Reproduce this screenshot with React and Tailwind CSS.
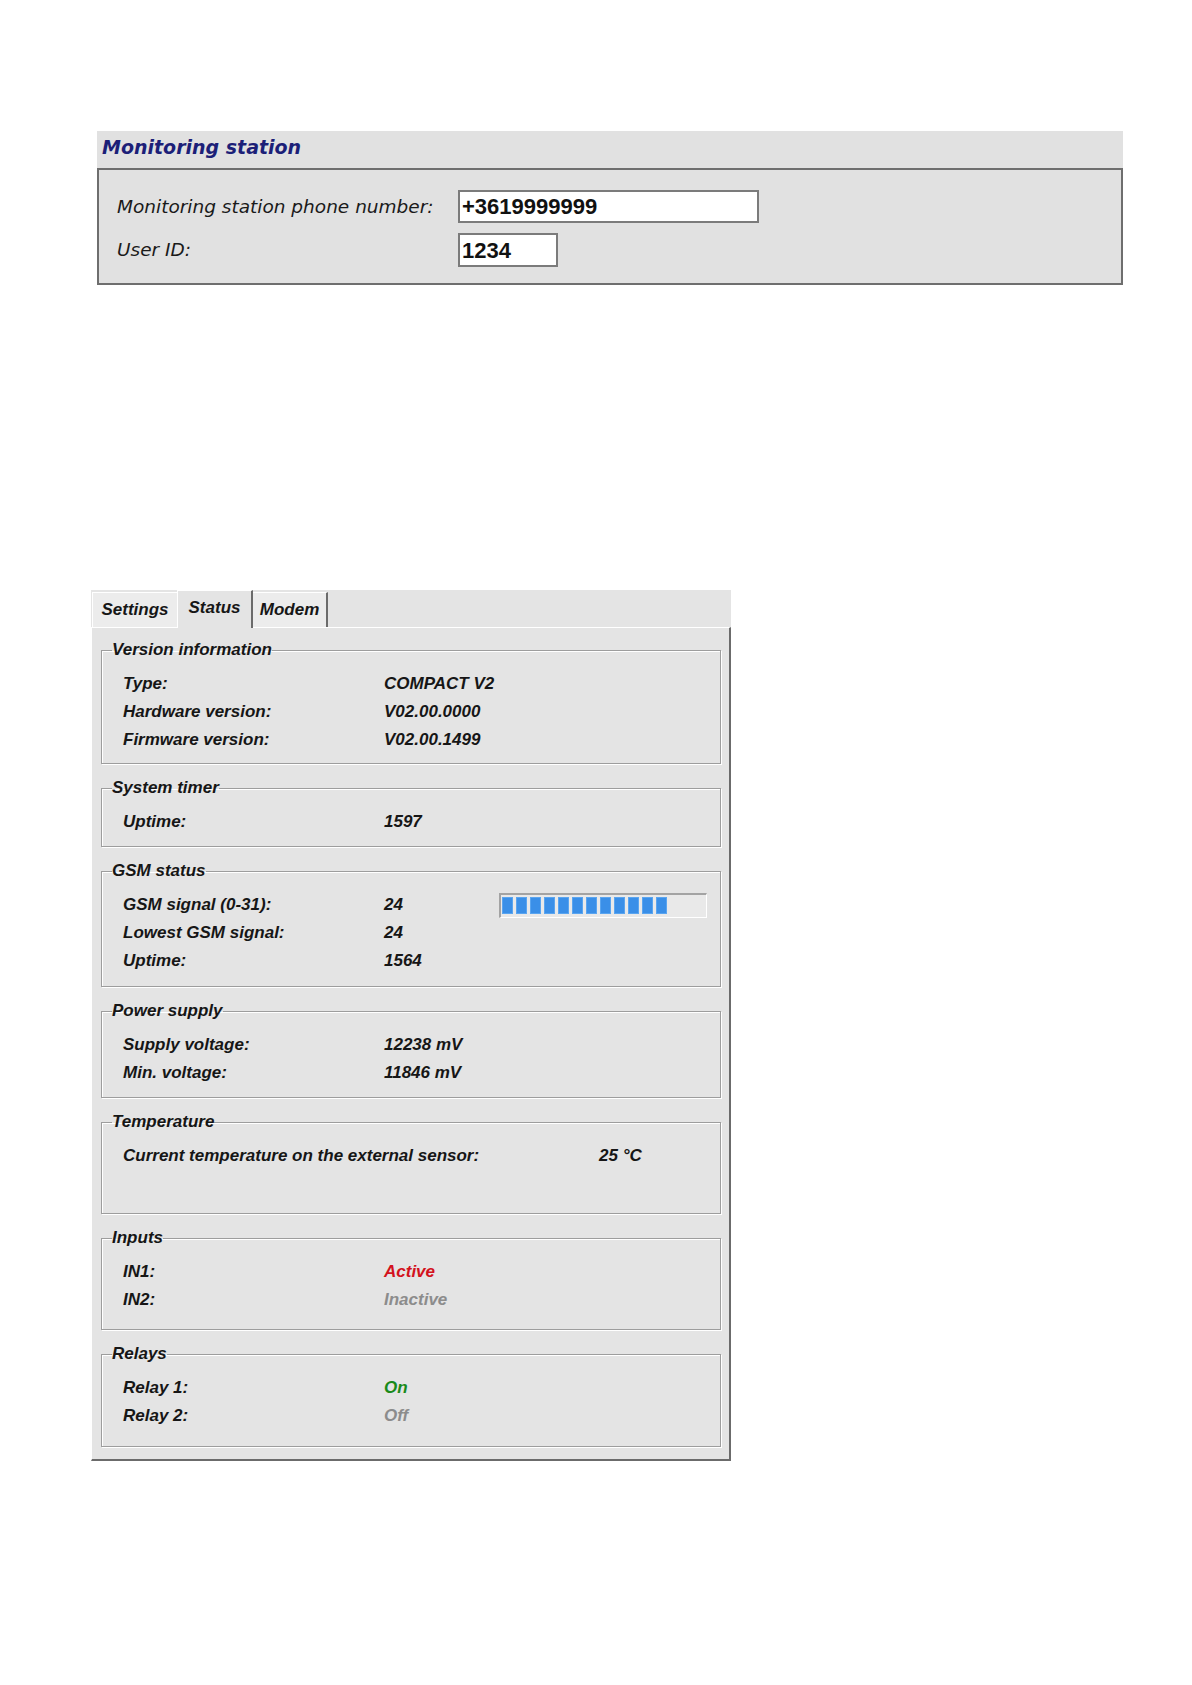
const rowLabel = "text-[17px] leading-[28px] font-bold italic text-[#161616]";

const GroupBox = ({ title, className = "", children }) => (
  <fieldset
    className={`border border-[#9d9d9d] shadow-[1px_1px_0_#ffffff,inset_1px_1px_0_#ffffff] pt-[10px] ${className}`}
  >
    <legend className="ml-[10px] px-0 text-[17px] leading-[20px] font-bold italic text-[#161616]">
      {title}
    </legend>
    <div className="pl-[21px]">{children}</div>
  </fieldset>
);

const Row = ({ label, value, valueClass = "text-[#161616]" }) => (
  <div className="grid grid-cols-[261px_1fr]">
    <span className={rowLabel}>{label}</span>
    <span className={`text-[17px] leading-[28px] font-bold italic ${valueClass}`}>{value}</span>
  </div>
);

const SignalBar = ({ segments }) => (
  <div className="w-[208px] h-[25px] border-t-2 border-l-2 border-t-[#a3a3a3] border-l-[#a3a3a3] border-b border-r border-b-white border-r-white bg-[#e9e9e9] flex items-center gap-[3px] pl-[1px]">
    {Array.from({ length: segments }).map((_, i) => (
      <div key={i} className="w-[11px] h-[17px] bg-[#3a8fe8] border border-[#5aa5f0]" />
    ))}
  </div>
);

const App = () => {
  return (
    <div className="min-h-[1685px] bg-white font-['Liberation_Sans',Arial,sans-serif]">
      {/* Monitoring station */}
      <div className="pt-[131px] pl-[97px]">
        <section className="w-[1026px]">
          <div className="h-[37px] bg-[#e1e1e1] pl-[5px] pt-[2px] font-['DejaVu_Sans',sans-serif] text-[19px] font-bold italic text-[#1c1f78]">
            Monitoring station
          </div>
          <div className="h-[117px] border-2 border-[#6e6e6e] bg-[#e1e1e1] pl-[18px] pt-[20px] font-['DejaVu_Sans',sans-serif] text-[18.5px] italic text-[#1a1a1a]">
            <div className="flex items-center h-[33px]">
              <span className="w-[341px]">Monitoring station phone number:</span>
              <div className="w-[301px] h-[33px] bg-white border-2 border-[#7b7b7b] pl-[2px] flex items-center font-['Liberation_Sans',Arial,sans-serif] not-italic font-bold text-[22px] text-[#111]">
                +3619999999
              </div>
            </div>
            <div className="flex items-center h-[34px] mt-[10px]">
              <span className="w-[341px]">User ID:</span>
              <div className="w-[100px] h-[34px] bg-white border-2 border-[#7b7b7b] pl-[2px] flex items-center font-['Liberation_Sans',Arial,sans-serif] not-italic font-bold text-[22px] text-[#111]">
                1234
              </div>
            </div>
          </div>
        </section>
      </div>

      {/* Status window */}
      <div className="mt-[305px] ml-[91px] w-[640px] bg-[#e4e4e4]">
        <div className="flex items-end h-[37px] pl-[1px]">
          <div className="w-[85px] h-[35px] bg-[#ececec] border-t border-l border-white flex items-center justify-center text-[17px] font-bold italic text-[#161616]">
            Settings
          </div>
          <div className="relative z-10 -mb-px w-[76px] h-[38px] bg-[#e4e4e4] border-t border-l border-white border-r-2 border-r-[#6b6b6b] flex items-center justify-center pb-[4px] text-[17px] font-bold italic text-[#161616]">
            Status
          </div>
          <div className="w-[75px] h-[35px] bg-[#ececec] border-t border-t-white border-r-2 border-r-[#6b6b6b] flex items-center justify-center text-[17px] font-bold italic text-[#161616]">
            Modem
          </div>
        </div>
        <div className="border-t border-l border-t-white border-l-white border-r-2 border-b-2 border-r-[#6b6b6b] border-b-[#6b6b6b] pt-[12px] pl-[9px] pr-[8px] pb-[12px] flex flex-col gap-[14px]">
          <GroupBox title="Version information" className="pb-[9px]">
            <Row label="Type:" value="COMPACT V2" />
            <Row label="Hardware version:" value="V02.00.0000" />
            <Row label="Firmware version:" value="V02.00.1499" />
          </GroupBox>

          <GroupBox title="System timer" className="pb-[10px]">
            <Row label="Uptime:" value="1597" />
          </GroupBox>

          <GroupBox title="GSM status" className="pb-[11px]">
            <div className="grid grid-cols-[261px_1fr]">
              <span className={rowLabel}>GSM signal (0-31):</span>
              <div className="flex items-center h-[28px]">
                <span className="w-[115px] text-[17px] leading-[28px] font-bold italic text-[#161616]">24</span>
                <SignalBar segments={12} />
              </div>
            </div>
            <Row label="Lowest GSM signal:" value="24" />
            <Row label="Uptime:" value="1564" />
          </GroupBox>

          <GroupBox title="Power supply" className="pb-[10px]">
            <Row label="Supply voltage:" value="12238 mV" />
            <Row label="Min. voltage:" value="11846 mV" />
          </GroupBox>

          <GroupBox title="Temperature" className="pb-[43px]">
            <div className="flex">
              <span className={`${rowLabel} w-[476px]`}>Current temperature on the external sensor:</span>
              <span className={rowLabel}>25 °C</span>
            </div>
          </GroupBox>

          <GroupBox title="Inputs" className="pb-[15px]">
            <Row label="IN1:" value="Active" valueClass="text-[#d3121d]" />
            <Row label="IN2:" value="Inactive" valueClass="text-[#8c8c8c]" />
          </GroupBox>

          <GroupBox title="Relays" className="pb-[16px]">
            <Row label="Relay 1:" value="On" valueClass="text-[#1a8a1a]" />
            <Row label="Relay 2:" value="Off" valueClass="text-[#8c8c8c]" />
          </GroupBox>
        </div>
      </div>
    </div>
  );
};

export default App;
